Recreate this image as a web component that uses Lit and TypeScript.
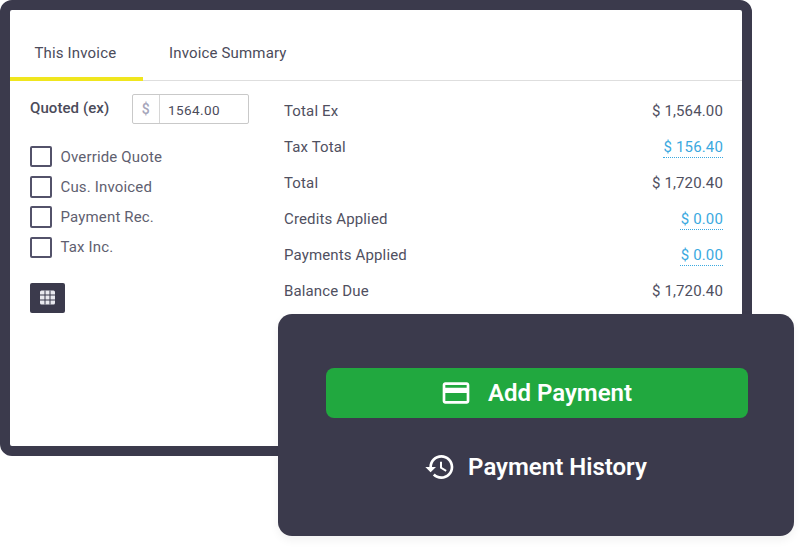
import { LitElement, html, css, svg } from "lit";
import { customElement } from "lit/decorators.js";

const rows: [string, string, boolean][] = [
  ["Total Ex", "$ 1,564.00", false],
  ["Tax Total", "$ 156.40", true],
  ["Total", "$ 1,720.40", false],
  ["Credits Applied", "$ 0.00", true],
  ["Payments Applied", "$ 0.00", true],
  ["Balance Due", "$ 1,720.40", false],
];
const checks = ["Override Quote", "Cus. Invoiced", "Payment Rec.", "Tax Inc."];

@customElement("app-root")
export class AppRoot extends LitElement {
  static styles = css`
    :host { display: block; width: 800px; height: 548px; position: relative; background: #fff; overflow: hidden; font-family: Roboto, "Liberation Sans", sans-serif; color: #50505f; }
    * { box-sizing: border-box; }
    .frame { width: 752px; height: 456px; border: 10px solid #3b3a4c; border-radius: 12px; background: #fff; }
    .tabs { height: 71px; display: flex; border-bottom: 1px solid #dedede; }
    .tab { height: 70px; padding: 35px 0 0 24.5px; font-size: 15px; line-height: 17px; letter-spacing: .16px; color: #4b4b5a; }
    .tab.on { width: 133px; border-bottom: 4px solid #f0e61e; height: 71px; }
    .tab.off { padding-left: 26px; }
    .body { display: flex; }
    .left { width: 274px; padding: 13px 0 0 20px; }
    .quoted { display: flex; align-items: center; width: 219px; justify-content: space-between; }
    .qlabel { font-size: 15px; font-weight: 500; letter-spacing: .08px; color: #4b4b5a; position: relative; top: -1px; }
    .input { width: 117px; height: 30px; border: 1px solid #c9c9c9; border-radius: 2px; display: flex; align-items: center; font-size: 13.5px; letter-spacing: .4px; color: #4b4b5a; }
    .addon { width: 27px; height: 28px; border-right: 1px solid #d6d6d6; color: #a5a5ba; font-weight: 500; display: flex; align-items: center; justify-content: center; font-size: 14px; }
    .val { padding-left: 8px; position: relative; top: 1px; }
    .checks { margin-top: 22px; display: flex; flex-direction: column; gap: 9.33px; }
    .check { display: flex; align-items: center; gap: 9px; height: 21px; font-size: 15px; color: #5f5f70; letter-spacing: .16px; }
    .box { width: 21.5px; height: 21.5px; flex: none; border: 2px solid #53526a; border-radius: 2px; background: #fff; }
    .grid-btn { margin-top: 25px; width: 35px; height: 30px; border-radius: 2px; background: #3b3a4c; display: flex; align-items: center; justify-content: center; }
    .right { flex: 1; padding: 13px 19px 0 0; }
    .row { height: 36px; display: flex; align-items: center; justify-content: space-between; font-size: 15px; letter-spacing: .14px; color: #50505f; padding-bottom: 2px; }
    .link { color: #3ba9e0; border-bottom: 1.5px dotted #3ba9e0; padding: 0 0 1px 1px; line-height: 17px; margin-top: 2px; }
    .popup { position: absolute; left: 278px; top: 314px; width: 516px; height: 222px; border-radius: 14px; background: #3b3a4c; box-shadow: 0 4px 10px rgba(0,0,0,.06); padding: 54px 46px 0 48px; display: flex; flex-direction: column; color: #fff; font-weight: 600; font-size: 24px; }
    .add { height: 50px; border-radius: 8px; background: #21a83f; display: flex; align-items: center; justify-content: center; gap: 16px; padding-right: 2px; }
    .hist { margin-top: 29px; height: 40px; display: flex; align-items: center; justify-content: center; gap: 12px; padding-right: 3px; }
    svg { display: block; }
  `;

  render() {
    return html`
      <div class="frame">
        <div class="tabs">
          <div class="tab on">This Invoice</div>
          <div class="tab off">Invoice Summary</div>
        </div>
        <div class="body">
          <div class="left">
            <div class="quoted">
              <span class="qlabel">Quoted (ex)</span>
              <div class="input"><span class="addon">$</span><span class="val">1564.00</span></div>
            </div>
            <div class="checks">
              ${checks.map((c) => html`<div class="check"><span class="box"></span><span>${c}</span></div>`)}
            </div>
            <div class="grid-btn">
              <svg width="15" height="15" viewBox="0 0 15 15">
                <rect x="0" y="0.5" width="15" height="14" rx="1.5" fill="#e8e8ee"></rect>
                ${[5, 10].map((x) => svg`<rect x="${x - 0.5}" y="0.5" width="1" height="14" fill="#3b3a4c"></rect>`)}
                ${[5, 10].map((y) => svg`<rect x="0" y="${y - 0.5}" width="15" height="1" fill="#3b3a4c"></rect>`)}
              </svg>
            </div>
          </div>
          <div class="right">
            ${rows.map(([l, v, link]) => html`<div class="row"><span>${l}</span><span class=${link ? "link" : ""}>${v}</span></div>`)}
          </div>
        </div>
      </div>
      <div class="popup">
        <div class="add">
          <svg width="32" height="32" viewBox="0 0 24 24" fill="#fff"><path d="M20 4H4c-1.11 0-1.99.89-1.99 2L2 18c0 1.11.89 2 2 2h16c1.11 0 2-.89 2-2V6c0-1.11-.89-2-2-2zm0 14H4v-6h16v6zm0-10H4V6h16v2z"></path></svg>
          <span>Add Payment</span>
        </div>
        <div class="hist">
          <svg width="32" height="32" viewBox="0 0 24 24" fill="#fff"><path d="M13 3c-4.97 0-9 4.03-9 9H1l3.89 3.89.07.14L9 12H6c0-3.87 3.13-7 7-7s7 3.13 7 7-3.13 7-7 7c-1.93 0-3.68-.79-4.94-2.06l-1.42 1.42C8.27 19.99 10.51 21 13 21c4.97 0 9-4.03 9-9s-4.03-9-9-9zm-1 5v5l4.28 2.54.72-1.21-3.5-2.08V8H12z"></path></svg>
          <span>Payment History</span>
        </div>
      </div>
    `;
  }
}
